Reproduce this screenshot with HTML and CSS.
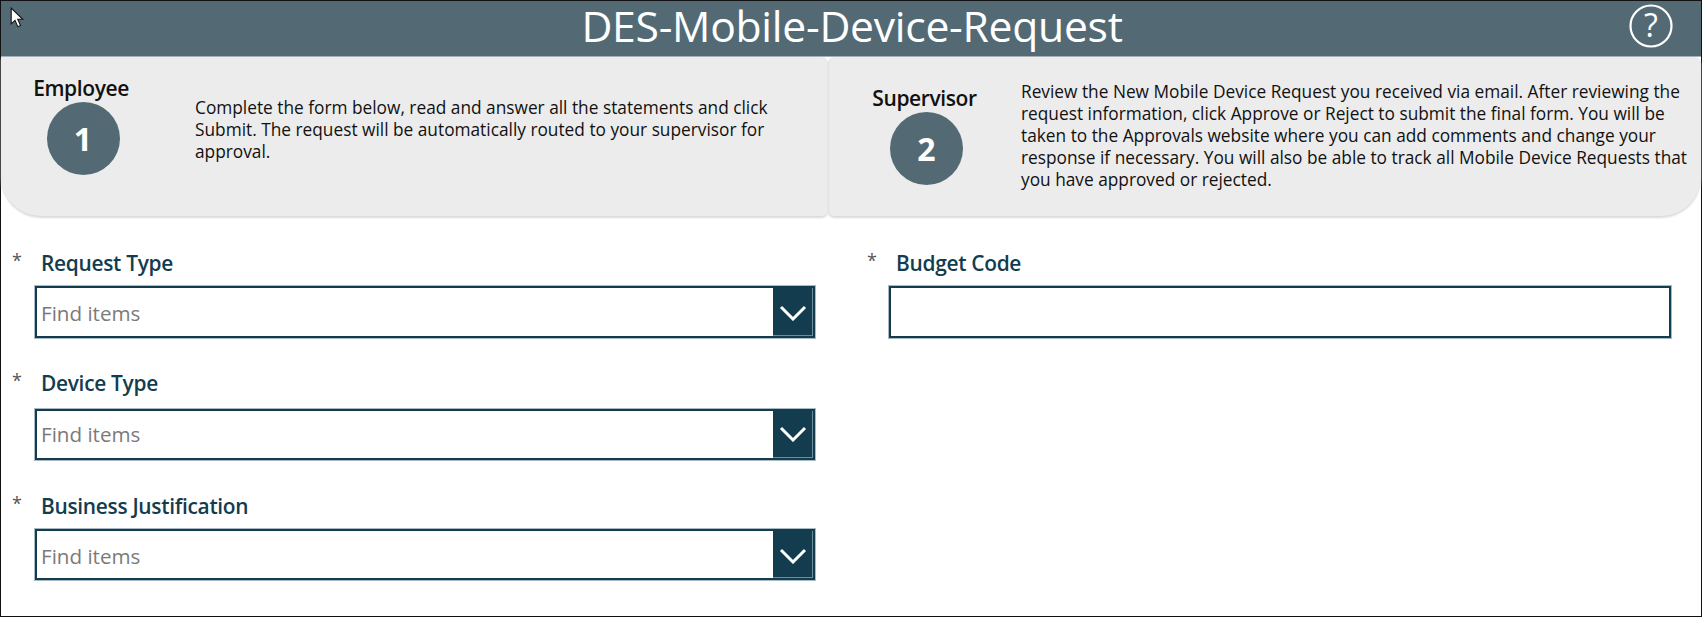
FILE: index.html
```html
<!DOCTYPE html>
<html lang="en">
<head>
<meta charset="utf-8">
<title>DES-Mobile-Device-Request</title>
<link rel="stylesheet" href="styles.css">
</head>
<body>
<div class="app">
  <svg class="cursor" width="15" height="21" viewBox="0 0 14 20"><path d="M1 1v15l3.6-3.3 2.7 6 2.6-1.1-2.7-5.9H12z" fill="#fff" stroke="#111" stroke-width="1"/></svg>
  <header class="topbar">
    <h1 class="title">DES-Mobile-Device-Request</h1>
    <svg class="help" width="44" height="44" viewBox="0 0 44 44"><circle cx="22" cy="22" r="20.5" fill="none" stroke="#fff" stroke-width="2.2"/><text x="22" y="33" text-anchor="middle" class="help-mark">?</text></svg>
  </header>
  <section class="steps">
    <div class="step step-one">
      <div class="badge-col">
        <div class="step-name">Employee</div>
        <div class="badge">1</div>
      </div>
      <p class="step-text">Complete the form below, read and answer all the statements and click<br>Submit. The request will be automatically routed to your supervisor for<br>approval.</p>
    </div>
    <div class="step step-two">
      <div class="badge-col">
        <div class="step-name">Supervisor</div>
        <div class="badge">2</div>
      </div>
      <p class="step-text">Review the New Mobile Device Request you received via email. After reviewing the<br>request information, click Approve or Reject to submit the final form. You will be<br>taken to the Approvals website where you can add comments and change your<br>response if necessary. You will also be able to track all Mobile Device Requests that<br>you have approved or rejected.</p>
    </div>
  </section>
  <main class="form">
    <div class="col">
      <div class="field">
        <div class="label-row"><span class="star">*</span><label class="label">Request Type</label></div>
        <div class="box"><span class="placeholder">Find items</span><span class="drop"><svg width="28" height="16" viewBox="0 0 28 16"><path d="M2 2l12 12L26 2" fill="none" stroke="#fff" stroke-width="3"/></svg></span></div>
      </div>
      <div class="field second">
        <div class="label-row"><span class="star">*</span><label class="label">Device Type</label></div>
        <div class="box"><span class="placeholder">Find items</span><span class="drop"><svg width="28" height="16" viewBox="0 0 28 16"><path d="M2 2l12 12L26 2" fill="none" stroke="#fff" stroke-width="3"/></svg></span></div>
      </div>
      <div class="field third">
        <div class="label-row"><span class="star">*</span><label class="label">Business Justification</label></div>
        <div class="box"><span class="placeholder">Find items</span><span class="drop"><svg width="28" height="16" viewBox="0 0 28 16"><path d="M2 2l12 12L26 2" fill="none" stroke="#fff" stroke-width="3"/></svg></span></div>
      </div>
    </div>
    <div class="col">
      <div class="field">
        <div class="label-row"><span class="star">*</span><label class="label">Budget Code</label></div>
        <div class="box"></div>
      </div>
    </div>
  </main>
</div>
</body>
</html>
```
FILE: styles.css
```css
* { box-sizing: border-box; }
html, body { margin: 0; padding: 0; background: #fff; }
body { width: 1702px; height: 617px; font-family: "Open Sans", "Noto Sans", sans-serif; }
.app { position: relative; width: 1702px; height: 617px; border: 1px solid #111; }
.cursor { position: absolute; left: 9px; top: 6px; z-index: 2; }
.topbar { height: 56px; background: #536a75; display: flex; align-items: center; justify-content: center; position: relative; border-bottom: 1px solid #a4b0b6; padding-bottom: 5px; }
.title { margin: 0; font-size: 42.7px; font-weight: 400; line-height: 50px; color: #fff; letter-spacing: -0.3px; position: relative; left: 1px; }
.help { position: absolute; right: 28px; top: 3px; }
.help-mark { font-family: "Open Sans", sans-serif; font-size: 32px; font-weight: 400; fill: #fff; }
.steps { height: 159px; display: grid; grid-template-columns: 827px 1fr; }
.step { background: #ececec; display: flex; box-shadow: 0 2px 2px #dcdcdc; }
.step-one { border-radius: 0 6px 6px 40px; padding-left: 34px; }
.step-two { border-radius: 6px 6px 40px 6px; padding-left: 44px; border-left: 1px solid #e2e2e2; }
.badge-col { display: flex; flex-direction: column; align-items: center; }
.step-one .badge-col { width: 96px; margin-top: 18px; }
.step-two .badge-col { width: 105px; margin-top: 28px; }
.step-name { font-size: 21px; font-weight: 600; line-height: 26px; color: #111; letter-spacing: -0.4px; white-space: nowrap; margin-right: 4px; }
.step-two .step-name { margin-right: 2px; }
.badge { width: 73px; height: 73px; border-radius: 50%; margin-top: 1px; background: #536a75; color: #fff; font-size: 32px; font-weight: 700; display: flex; align-items: center; justify-content: center; }
.step-two .badge { margin-left: 2px; }
.step-text { margin: 0; font-size: 17.3px; line-height: 22px; color: #111; white-space: nowrap; }
.step-one .step-text { margin: 40px 0 0 64px; }
.step-two .step-text { margin: 24px 0 0 43px; }
.form { display: grid; grid-template-columns: 804px 1fr; padding: 34px 0 0 11px; column-gap: 51px; }
.label-row { display: flex; align-items: center; height: 26px; }
.star { width: 29px; font-size: 18px; color: #555; position: relative; top: -3px; }
.label { font-size: 20.9px; font-weight: 600; color: #133c4f; letter-spacing: -0.3px; }
.box { margin: 9px 0 0 22px; height: 54px; border: 3px solid #133c4f; outline: 1px solid #a9bac3; outline-offset: -1px; background: #fff; display: flex; align-items: center; justify-content: space-between; }
.col:last-child .box { width: 784px; margin-left: 21px; }
.placeholder { font-size: 20.6px; color: #7a7a7a; padding: 2px 0 0 4px; }
.drop { width: 40px; height: 100%; padding-top: 2px; background: #133c4f; box-shadow: inset -1px -1px 0 #6f8c99; display: flex; align-items: center; justify-content: center; }
.second { margin-top: 31px; }
.second .box { margin-top: 12px; height: 53px; }
.second .placeholder, .second .drop { padding-top: 0; padding-bottom: 2px; }
.third { margin-top: 32px; }
.third .box { height: 53px; }
.third .placeholder, .third .drop { padding-top: 3px; }
```
